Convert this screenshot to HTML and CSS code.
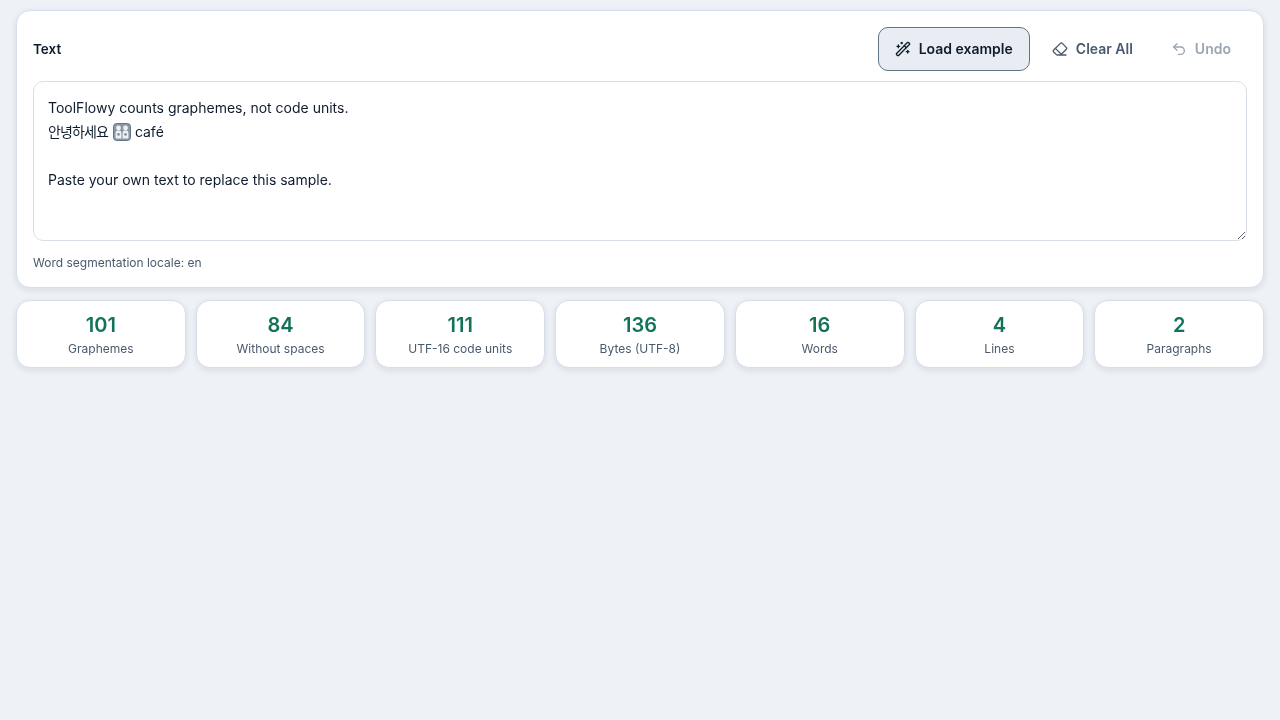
FILE: index.html
```html
<!DOCTYPE html>
<html lang="en">
<head>
<meta charset="utf-8">
<title>Text counter</title>
<link rel="stylesheet" href="styles.css">
</head>
<body>
<main class="page">
  <section class="card">
    <div class="card-head">
      <label class="field-label" id="input-label">Text</label>
      <div class="actions">
        <button class="btn btn-active" type="button">
          <svg class="icon" viewBox="0 0 24 24"><path d="m21.64 3.64-1.28-1.28a1.21 1.21 0 0 0-1.72 0L2.36 18.64a1.21 1.21 0 0 0 0 1.72l1.28 1.28a1.2 1.2 0 0 0 1.72 0L21.64 5.36a1.2 1.2 0 0 0 0-1.72"/><path d="m14 7 3 3"/><path d="M5 6v4"/><path d="M19 14v4"/><path d="M10 2v2"/><path d="M7 8H3"/><path d="M21 16h-4"/><path d="M11 3H9"/></svg>
          <span>Load example</span>
        </button>
        <button class="btn" type="button">
          <svg class="icon" viewBox="0 0 24 24"><path d="M21 21H8a2 2 0 0 1-1.42-.587l-3.994-3.999a2 2 0 0 1 0-2.828l10-10a2 2 0 0 1 2.829 0l5.999 6a2 2 0 0 1 0 2.828L12.834 21"/><path d="m5.082 11.09 8.828 8.828"/></svg>
          <span>Clear All</span>
        </button>
        <button class="btn btn-disabled" type="button" disabled>
          <svg class="icon" viewBox="0 0 24 24"><path d="M9 14 4 9l5-5"/><path d="M4 9h10.5a5.5 5.5 0 0 1 5.5 5.5a5.5 5.5 0 0 1-5.5 5.5H11"/></svg>
          <span>Undo</span>
        </button>
      </div>
    </div>
    <div class="editor" role="textbox" aria-multiline="true" aria-labelledby="input-label" contenteditable="true" spellcheck="false">ToolFlowy counts graphemes, not code units.
<span class="hangul" lang="ko">안녕하세요</span> <svg class="emoji" viewBox="0 0 18 18" role="img" aria-label="family"><rect x="0.5" y="0.5" width="17" height="17" rx="3.2" class="emoji-tile"/><circle cx="5.5" cy="5" r="2.4" class="emoji-fig"/><circle cx="12.5" cy="5" r="2.4" class="emoji-fig"/><path d="M2.6 15.5V10a2.4 2.4 0 0 1 2.4-2.4h1a2.4 2.4 0 0 1 2.4 2.4v5.5zM9.6 15.5V10A2.4 2.4 0 0 1 12 7.6h1a2.4 2.4 0 0 1 2.4 2.4v5.5z" class="emoji-fig"/><circle cx="5.5" cy="11.4" r="1.3" class="emoji-kid"/><circle cx="12.5" cy="11.4" r="1.3" class="emoji-kid"/></svg> café

Paste your own text to replace this sample.</div>
    <p class="hint">Word segmentation locale: en</p>
  </section>
  <section class="stats">
    <div class="stat"><strong class="stat-value">101</strong><span class="stat-label">Graphemes</span></div>
    <div class="stat"><strong class="stat-value">84</strong><span class="stat-label">Without spaces</span></div>
    <div class="stat"><strong class="stat-value">111</strong><span class="stat-label">UTF-16 code units</span></div>
    <div class="stat"><strong class="stat-value">136</strong><span class="stat-label">Bytes (UTF-8)</span></div>
    <div class="stat"><strong class="stat-value">16</strong><span class="stat-label">Words</span></div>
    <div class="stat"><strong class="stat-value">4</strong><span class="stat-label">Lines</span></div>
    <div class="stat"><strong class="stat-value">2</strong><span class="stat-label">Paragraphs</span></div>
  </section>
</main>
</body>
</html>
```
FILE: styles.css
```css
* { box-sizing: border-box; }
html, body { margin: 0; height: 100%; }
body {
  background: #eef1f6;
  color: #0f1c2e;
  font-family: Inter, "Noto Sans CJK KR", sans-serif;
  font-size: 14px;
  overflow: hidden;
}
.page {
  display: flex;
  flex-direction: column;
  gap: 12px;
  padding: 10px 16px 0;
  will-change: opacity;
}
.card {
  background: #fff;
  border: 1px solid #d8dee9;
  border-radius: 14px;
  box-shadow: 0 2px 6px rgba(30, 50, 80, 0.11);
  padding: 16px;
}
.card-head {
  display: flex;
  align-items: center;
  justify-content: space-between;
  margin-bottom: 10px;
}
.field-label {
  font-size: 13.5px;
  font-weight: 600;
}
.actions {
  display: flex;
  gap: 4px;
  margin-right: -1px;
}
.btn {
  display: inline-flex;
  align-items: center;
  gap: 8px;
  height: 44px;
  padding: 0 16px;
  background: transparent;
  border: 1px solid transparent;
  border-radius: 10px;
  color: #4a5a6e;
  font: 600 14px/20px Inter, sans-serif;
}
.btn span { margin-top: -1px; }
.btn-active {
  margin-right: 1px;
  background: #e9edf3;
  border-color: #5f7485;
  color: #0f1c2e;
}
.btn-disabled {
  color: #9aa6b2;
}
.icon {
  width: 16px;
  height: 16px;
  fill: none;
  stroke: currentColor;
  stroke-width: 2;
  stroke-linecap: round;
  stroke-linejoin: round;
}
.editor {
  display: block;
  width: 100%;
  height: 160px;
  padding: 14px;
  overflow: auto;
  resize: both;
  white-space: pre-wrap;
  background: #fff;
  border: 1px solid #d8dee9;
  border-radius: 10px;
  color: #0f1c2e;
  font: 400 14px/24px Inter, "Noto Sans CJK KR", sans-serif;
  outline: none;
}
.hangul {
  font-size: 14px;
  letter-spacing: -0.88px;
}
.emoji {
  width: 18px;
  height: 18px;
  margin-left: 1px;
  vertical-align: -4px;
}
.emoji-tile {
  fill: #8b99a6;
  stroke: #66757f;
  stroke-width: 1;
}
.emoji-fig {
  fill: #eef1f4;
}
.emoji-kid {
  fill: #7f8d9a;
}
.hint {
  margin: 14px 0 0;
  color: #4a5a6e;
  font-size: 12px;
  line-height: 16px;
}
.stats {
  display: grid;
  grid-template-columns: repeat(7, 1fr);
  gap: 10px;
}
.stat {
  display: flex;
  flex-direction: column;
  align-items: center;
  height: 68px;
  padding-top: 12px;
  background: #fff;
  border: 1px solid #d8dee9;
  border-radius: 14px;
  box-shadow: 0 2px 6px rgba(30, 50, 80, 0.11);
}
.stat-value {
  color: #12735a;
  font-size: 20px;
  font-weight: 600;
  line-height: 24px;
}
.stat-label {
  margin-top: 4px;
  color: #4a5a6e;
  font-size: 12px;
  line-height: 16px;
}
```
